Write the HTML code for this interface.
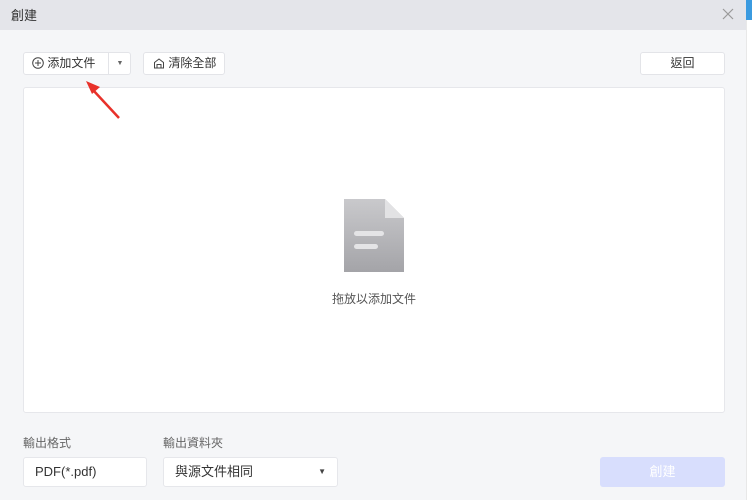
<!DOCTYPE html>
<html><head><meta charset="utf-8"><style>
*{box-sizing:border-box;margin:0;padding:0}
body{width:752px;height:500px;overflow:hidden;background:#fff;font-family:"Liberation Sans","Noto Sans CJK TC",sans-serif;position:relative}
.dlg{position:absolute;left:0;top:0;width:746px;height:500px;background:#f5f6f8}
.hdr{height:30px;background:#e4e5ea;font-size:13px;color:#333;padding:5px 0 0 11px;position:relative}
.x{position:absolute;right:10px;top:6px;width:16px;height:16px}
.btn{position:absolute;background:#fff;border:1px solid #e3e4e8;border-radius:3px;font-size:12px;color:#333;height:23px;line-height:21px}
.drop{position:absolute;left:23px;top:87px;width:702px;height:326px;background:#fff;border:1px solid #e6e7eb;border-radius:3px}
.lbl{position:absolute;top:434px;font-size:12px;color:#666}
.inp{position:absolute;top:457px;height:30px;background:#fff;border:1px solid #e6e7eb;border-radius:3px;font-size:13px;color:#333;line-height:28px;padding-left:11px}
</style></head><body>
<div style="position:absolute;left:746px;top:0;width:6px;height:500px;background:#fff;border-left:1px solid #e8e8e8"></div>
<div style="position:absolute;left:746px;top:0;width:6px;height:20px;background:#3b9be0"></div>
<div class="dlg">
<div class="hdr">創建
<svg class="x" viewBox="0 0 16 16"><path d="M3 3L13 13M13 3L3 13" stroke="#999" stroke-width="1.2"/></svg></div>
<div class="btn" style="left:23px;top:52px;width:108px">
<span style="position:absolute;left:8px;top:0">
<svg width="12" height="12" viewBox="0 0 12 12" style="vertical-align:-2px"><circle cx="6" cy="6" r="5.3" fill="none" stroke="#444" stroke-width="1"/><path d="M6 3v6M3 6h6" stroke="#444"/></svg> 添加文件</span>
<span style="position:absolute;left:84px;top:0;height:21px;border-left:1px solid #e3e4e8;width:23px;text-align:center;font-size:7px;color:#666">▼</span></div>
<div class="btn" style="left:143px;top:52px;width:82px;padding-left:9px">
<svg width="12" height="12" viewBox="0 0 12 12" style="vertical-align:-2px"><path d="M1.5 5.5L6 2l4.5 3.5V11h-9z M4 11V7.5h4V11" fill="none" stroke="#444"/></svg> 清除全部</div>
<div class="btn" style="left:640px;top:52px;width:85px;text-align:center">返回</div>
<div class="drop">
<svg style="position:absolute;left:320px;top:111px" width="60" height="73" viewBox="0 0 60 73"><defs><linearGradient id="g" x1="0" y1="0" x2="0" y2="1"><stop offset="0" stop-color="#c9c9cc"/><stop offset="1" stop-color="#a4a4a8"/></linearGradient></defs><path d="M0 0H41L60 19V73H0Z" fill="url(#g)"/><path d="M41 0L60 19H41Z" fill="#e2e2e4"/><rect x="10" y="32" width="30" height="5" rx="2.5" fill="#e4e4e6"/><rect x="10" y="45" width="24" height="5" rx="2.5" fill="#e4e4e6"/></svg>
<div style="position:absolute;left:0;width:100%;top:202px;text-align:center;font-size:12px;color:#555">拖放以添加文件</div>
</div>
<svg style="position:absolute;left:84px;top:78px" width="40" height="42" viewBox="0 0 40 42"><path d="M35 40L9 12" stroke="#e8312a" stroke-width="2.5"/><path d="M2 3L16 9L8 16Z" fill="#e8312a"/></svg>
<div class="lbl" style="left:23px">輸出格式</div>
<div class="lbl" style="left:163px">輸出資料夾</div>
<div class="inp" style="left:23px;width:124px">PDF(*.pdf)</div>
<div class="inp" style="left:163px;width:175px">與源文件相同<span style="position:absolute;right:11px;font-size:8px;color:#444">▼</span></div>
<div style="position:absolute;left:600px;top:457px;width:125px;height:30px;background:#d8defd;border-radius:3px;color:#fff;font-size:13px;text-align:center;line-height:30px">創建</div>
</div>
</body></html>
